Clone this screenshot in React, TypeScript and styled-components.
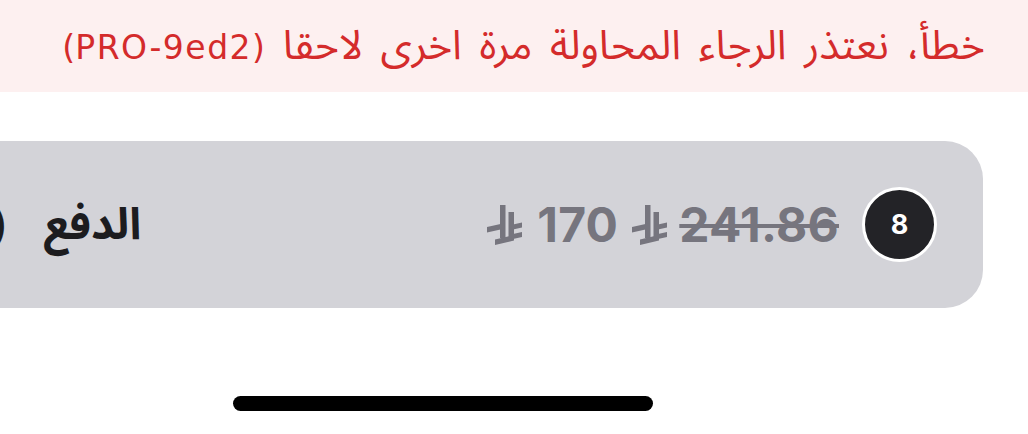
import React from "react";
import styled, { createGlobalStyle } from "styled-components";

const GlobalStyle = createGlobalStyle`
  html, body {
    margin: 0;
    padding: 0;
    background: #fff;
  }
  body {
    width: 1028px;
    height: 434px;
    overflow: hidden;
    font-family: "Noto Sans Arabic", "DejaVu Sans", "Liberation Sans", sans-serif;
  }
`;

const Screen = styled.div`
  width: 1028px;
  height: 434px;
  overflow: hidden;
  display: flex;
  flex-direction: column;
  background: #fff;
`;

const ErrorBanner = styled.div`
  height: 92px;
  background: #fdf0f0;
  display: flex;
  align-items: center;
  justify-content: flex-start;
  direction: rtl;
  padding-right: 43px;
  box-sizing: border-box;
`;

const ErrorText = styled.p`
  margin: 0;
  color: #d42b2b;
  font-size: 41px;
  word-spacing: 7px;
  line-height: 1;
  white-space: nowrap;
`;

const ErrorCode = styled.span`
  font-family: "DejaVu Sans", "Liberation Sans", sans-serif;
  font-size: 33px;
  letter-spacing: 1.5px;
  word-spacing: 0;
`;

const CheckoutBar = styled.div`
  margin-top: 49px;
  margin-left: -400px;
  margin-right: 45px;
  height: 167px;
  border-radius: 38px;
  background: #d3d3d8;
  display: flex;
  align-items: center;
  direction: rtl;
  padding-right: 46px;
  box-sizing: border-box;
  flex-shrink: 0;
`;

const CountBadge = styled.div`
  width: 69px;
  height: 69px;
  border-radius: 50%;
  background: #232327;
  border: 3px solid #fff;
  color: #fff;
  display: flex;
  align-items: center;
  justify-content: center;
  font-family: Inter, "Liberation Sans", sans-serif;
  font-weight: 700;
  font-size: 27px;
  flex-shrink: 0;
`;

const PriceGroup = styled.div`
  display: flex;
  align-items: center;
  direction: ltr;
  margin-right: 23px;
  color: #76757e;
  font-family: Inter, "Liberation Sans", sans-serif;
  font-weight: 700;
  font-size: 48px;
  line-height: 1;
  letter-spacing: 0.3px;
`;

const Amount = styled.span<{ $struck?: boolean }>`
  text-decoration: ${(p) => (p.$struck ? "line-through" : "none")};
  text-decoration-thickness: 4px;
`;

const Currency = styled.svg<{ $before: number; $after: number }>`
  width: 35px;
  height: 40px;
  margin-left: ${(p) => p.$before}px;
  margin-right: ${(p) => p.$after}px;
  flex-shrink: 0;
`;

const PayLabel = styled.div`
  margin-right: 346px;
  display: flex;
  align-items: center;
  gap: 38px;
  color: #1c1c1f;
  font-size: 44px;
  font-weight: 700;
  white-space: nowrap;
`;

const HomeIndicator = styled.div`
  margin-top: 88px;
  margin-left: 233px;
  width: 420px;
  height: 15px;
  border-radius: 8px;
  background: #000;
  flex-shrink: 0;
`;

const RiyalSign: React.FC<{ before: number; after: number }> = ({ before, after }) => (
  <Currency $before={before} $after={after} viewBox="0 0 35 40" fill="currentColor">
    <rect x="13" y="0" width="5.5" height="33" />
    <polygon points="0,22 18,18 18,23.5 0,27.5" />
    <polygon points="8,34.5 27,30 27,35.5 8,40" />
    <rect x="21.5" y="7" width="5.5" height="27" />
    <polygon points="26,19.5 35,17.5 35,22.5 26,24.5" />
    <polygon points="26,29 35,27 35,32 26,34" />
  </Currency>
);

export default function App() {
  return (
    <>
      <GlobalStyle />
      <Screen>
        <ErrorBanner>
          <ErrorText>
            خطأ، نعتذر الرجاء المحاولة مرة اخرى لاحقا <ErrorCode>(PRO-9ed2)</ErrorCode>
          </ErrorText>
        </ErrorBanner>
        <CheckoutBar>
          <CountBadge>8</CountBadge>
          <PriceGroup>
            <RiyalSign before={0} after={15} />
            <Amount>170</Amount>
            <RiyalSign before={14} after={12} />
            <Amount $struck>241.86</Amount>
          </PriceGroup>
          <PayLabel>
            <span>الدفع</span>
            <span>(170)</span>
          </PayLabel>
        </CheckoutBar>
        <HomeIndicator />
      </Screen>
    </>
  );
}
